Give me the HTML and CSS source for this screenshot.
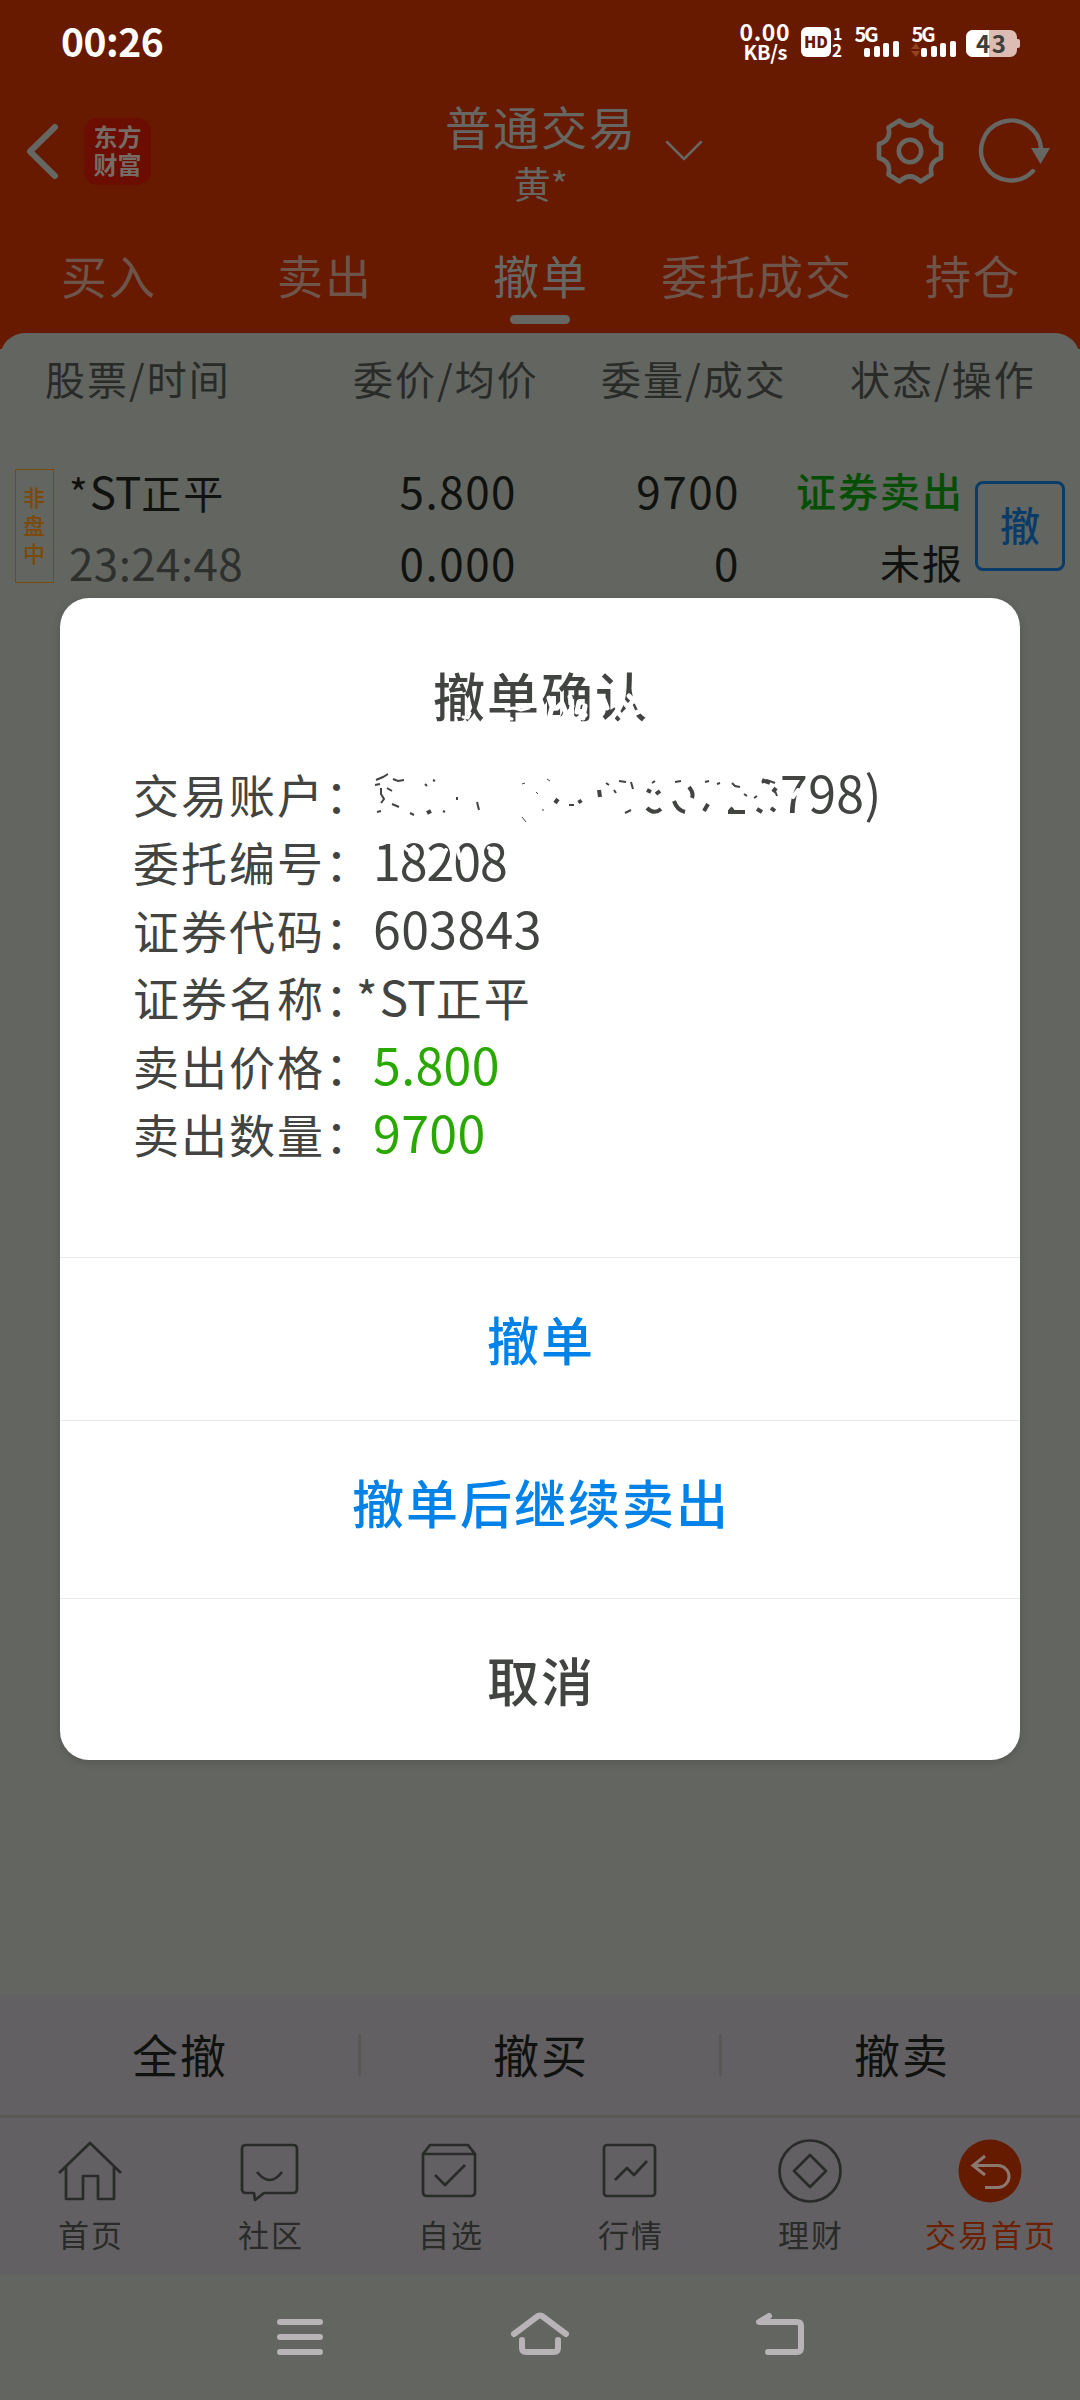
FILE: index.html
```
<!DOCTYPE html>
<html lang="zh-CN">
<head>
    <meta charset="UTF-8">
    <meta name="viewport" content="width=device-width, initial-scale=1.0">
    <title>普通交易</title>
    <link rel="stylesheet" href="styles.css">
</head>
<body>
<div class="phone">
    <header class="header">
        <!-- 状态栏 -->
        <div class="status-bar">
            <span class="time">00:26</span>
            <svg class="status-icons" width="290" height="50" viewBox="735 15 290 50">
                <g class="status-text">
                    <text x="739.5" y="41" font-size="23" textLength="50">0.00</text>
                    <text x="743.5" y="60" font-size="20" textLength="44">KB/s</text>
                    <text x="833" y="39.500" font-size="16">1</text>
                    <text x="832" y="56.500" font-size="17">2</text>
                    <text x="854.500" y="42" font-size="20" textLength="24">5G</text>
                    <text x="911.500" y="42" font-size="20" textLength="24">5G</text>
                </g>
                <rect x="801" y="27" width="30" height="30" rx="6" fill="#fff"/>
                <text class="hd" x="804" y="48" textLength="24">HD</text>
                <g fill="#fff">
                    <rect x="864" y="48" width="6" height="9" rx="2"/>
                    <rect x="874" y="46" width="6" height="11" rx="2"/>
                    <rect x="883" y="43" width="6" height="14" rx="2"/>
                    <rect x="893" y="41" width="6" height="16" rx="2"/>
                    <rect x="921" y="48" width="6" height="9" rx="2"/>
                    <rect x="931" y="46" width="6" height="11" rx="2"/>
                    <rect x="940" y="43" width="6" height="14" rx="2"/>
                    <rect x="950" y="41" width="6" height="16" rx="2"/>
                </g>
                <path d="M911 49l5-6 4 6zM911 51h9l-4 6z" fill="#95421f"/>
                <rect x="966" y="30" width="51" height="27" rx="7" fill="#dcbcb3"/>
                <rect x="1015" y="39" width="5" height="9" rx="2" fill="#dcbcb3"/>
                <path d="M989 30h-16a7 7 0 0 0-7 7v13a7 7 0 0 0 7 7h16z" fill="#fff"/>
                <text class="battery" x="976" y="53" textLength="30">43</text>
            </svg>
        </div>

        <!-- 标题栏 -->
        <div class="title-bar">
            <div class="title-left">
                <svg width="40" height="60" viewBox="0 0 40 60"><path d="M32 6L7 30.500 32 55" fill="none" stroke="#666762" stroke-width="6" stroke-linecap="round" stroke-linejoin="round"/></svg>
                <div class="logo"><span>东方</span><span>财富</span></div>
            </div>
            <div class="title-center">
                <div class="title">普通交易</div>
                <div class="account">黄*</div>
            </div>
            <div class="title-right">
                <svg class="arrow-down" width="40" height="24" viewBox="0 0 40 24"><path d="M3 3l17 17L37 3" fill="none" stroke="#666762" stroke-width="2.500" stroke-linecap="round" stroke-linejoin="round"/></svg>
                <svg width="70" height="70" viewBox="-35 -35 70 70" fill="none" stroke="#666762" stroke-width="4.600" stroke-linejoin="round">
                    <path d="M31 -7V7Q18.500 10.700 21.500 23.500L10.500 30.500Q0 20.500 -10.500 30.500L-21.500 23.500Q-18.500 10.700 -31 7V-7Q-18.500 -10.700 -21.500 -23.500L-10.500 -30.500Q0 -20.500 10.500 -30.500L21.500 -23.500Q18.500 -10.700 31 -7Z"/>
                    <circle r="11.200"/>
                </svg>
                <svg class="refresh" width="76" height="70" viewBox="-35 -35 76 70"><path d="M22 20A30 30 0 1 1 30 -3" fill="none" stroke="#666762" stroke-width="4.400" stroke-linecap="round"/><path d="M20 -3h19l-9.500 16z" fill="#666762"/></svg>
            </div>
        </div>

        <nav class="tabs">
            <span class="tab">买入</span>
            <span class="tab">卖出</span>
            <span class="tab active">撤单</span>
            <span class="tab">委托成交</span>
            <span class="tab">持仓</span>
        </nav>
    </header>

    <!-- 委托列表 -->
    <main class="sheet">
        <div class="list-head">
            <span>股票/时间</span>
            <span>委价/均价</span>
            <span>委量/成交</span>
            <span>状态/操作</span>
        </div>
        <div class="order">
            <div class="tag">非盘中</div>
            <div class="col name"><div>*<span class="num">ST</span>正平</div><div class="num gray">23:24:48</div></div>
            <div class="col price"><div class="num">5.800</div><div class="num">0.000</div></div>
            <div class="col count"><div class="num">9700</div><div class="num">0</div></div>
            <div class="col state"><div class="sell">证券卖出</div><div>未报</div></div>
            <div class="cancel-btn">撤</div>
        </div>
    </main>

    <div class="batch">
        <span>全撤</span>
        <span>撤买</span>
        <span>撤卖</span>
    </div>

    <nav class="menu">
        <div class="menu-item">
            <svg class="icon" viewBox="0 0 66 66"><path d="M2 35L33 5l31 30M9 29v32h17V38h15v23h16V29"/></svg>
            <span>首页</span>
        </div>
        <div class="menu-item">
            <svg class="icon" viewBox="0 0 66 66"><path d="M9 7h47q4 0 4 4v40q0 4-4 4H27l-9 7-1-7H9q-4 0-4-4V11q0-4 4-4zM20 34q13 16 25 0"/></svg>
            <span>社区</span>
        </div>
        <div class="menu-item">
            <svg class="icon" viewBox="0 0 66 66"><path d="M6 16l7-9h38l7 9v38q0 4-4 4H10q-4 0-4-4zM6 16h52M18 37l10 10 20-20"/></svg>
            <span>自选</span>
        </div>
        <div class="menu-item">
            <svg class="icon" viewBox="0 0 66 66"><rect x="7" y="7" width="51" height="51" rx="3"/><path d="M18 42l12-12 7 7 13-14"/></svg>
            <span>行情</span>
        </div>
        <div class="menu-item">
            <svg class="icon" viewBox="0 0 66 66"><circle cx="33" cy="33" r="30.500"/><path d="M33 17l16 16-16 16-16-16z"/></svg>
            <span>理财</span>
        </div>
        <div class="menu-item trade">
            <svg class="icon" viewBox="0 0 66 66"><circle class="disc" cx="33" cy="33" r="31.500"/><path d="M28 18L16 27.500 28 37M16 27.500h25a11 11 0 0 1 0 22H28"/></svg>
            <span>交易首页</span>
        </div>
    </nav>

    <!-- 系统导航 -->
    <div class="sys-nav">
        <svg width="60" height="50" viewBox="270 2310 60 50"><path d="M280 2322h40M280 2337h40M280 2352h40"/></svg>
        <svg width="60" height="50" viewBox="510 2310 60 50"><path d="M514 2334l24-18q2-1 4 0l24 18M522 2340v8q0 4 4 4h28q4 0 4-4v-8"/></svg>
        <svg width="60" height="50" viewBox="750 2310 60 50"><path d="M769 2316l-10 6h38q4 0 4 4v22q0 4-4 4h-29"/></svg>
    </div>

    <!-- 撤单确认弹窗 -->
    <div class="dialog">
        <div class="dialog-title">撤单确认</div>
        <div class="info">
            <div class="line">交易账户：<span class="num account-end">798)</span></div>
            <div class="line">委托编号：<span class="num order-no">18208</span></div>
            <div class="line">证券代码：<span class="num">603843</span></div>
            <div class="line">证券名称<span class="half">：</span><span class="stock">*<span class="num">ST</span>正平</span></div>
            <div class="line">卖出价格：<span class="num green">5.800</span></div>
            <div class="line">卖出数量：<span class="num green">9700</span></div>
        </div>
        <div class="action blue">撤单</div>
        <div class="action blue tall">撤单后继续卖出</div>
        <div class="action">取消</div>

        <!-- 账户涂抹 -->
        <svg class="smear" width="480" height="220" viewBox="360 660 480 220">
            <g fill="none" stroke="#fff" stroke-linecap="round" stroke-linejoin="round">
                <path stroke-width="3" d="M463 717l5 1 2-5M506 709l8-1 7 2 8-2M506 717l6 2M522 718l6-1"/>
                <path stroke-width="5" d="M549 698l3 9-3 12 7 1M557 708l5-5 4 10-4 8M570 697l2 9-3 12M561 719l8-4 7 5 9-5M579 702l-2 10M585 706l-2 12"/>
                <path stroke-width="5" d="M604 700l3 8M617 707l6-6 5 6 4-5M612 718l5-7 5 6M624 714l7-7 3 7 6-3M629 696l5 5"/>
                <path stroke-width="4" d="M378 852l4 4M404 847l5 4 5-4M446 850l-4 8M457 847l3 11M489 848l5 2M798 790l-5 7"/>
            </g>
            <g fill="none" stroke="#424442" stroke-width="2">
                <path d="M376 780l7-3 5-3M375 785l5-1M393 779l5 2 6-1M381 788v6l3 5-3 4M387 788l5 3M392 804l7 3M377 812l4-1M410 813l4 2M425 784l2 2M433 780l2 1M457 797v3M477 802l2 8M443 811l2 1"/>
                <path stroke-width="1" d="M522 784l3-1M536 792l2 2M522 817l4 5M547 779l3 2M542 810h2"/>
                <path d="M569 805h5M606 783l3 2M619 781l7 1M614 790l2 3M631 782l2 7M625 813l6-3M652 783l3-2M675 782l6-1M705 782l4-1M717 784l3-1M732 783l3 3 5 1M744 794l3 2M762 783l5-3 8 3M775 791l2 5M754 798l3-2"/>
            </g>
            <g fill="none" stroke="#424442" stroke-width="4">
                <path d="M427 813l4-2M555 803l3-4M579 800l2 3M599 790l1 7M647 790l4 2M656 794l4-3M647 808q7 7 14 1M689 787q5 6 3 11M674 801q3 9 11 11M704 811l4-7M728 812h17M733 808l-3 3M762 780l8 3M773 792l3-4M757 809l5 3M771 808l4 3"/>
            </g>
        </svg>
    </div>
</div>
</body>
</html>
```
FILE: styles.css
```
body {
    margin: 0;
    background-color: #626560;
    font-family: "Noto Sans CJK SC", sans-serif;
}

svg {
    display: block;
}

.phone {
    position: relative;
    display: flex;
    flex-direction: column;
    width: 1080px;
    height: 2400px;
    overflow: hidden;
    background-color: #626560;
}

/* header */
.header {
    height: 349px;
    background-color: #671a00;
}

.status-bar {
    display: flex;
    justify-content: space-between;
    align-items: flex-start;
    height: 92px;
    padding: 15px 55px 0 61px;
    box-sizing: border-box;
}

.time {
    color: #fff;
    font-size: 39px;
    font-weight: 700;
    line-height: 50px;
    letter-spacing: -0.5px;
}

.status-text {
    fill: #fff;
    font-weight: 700;
}

.hd {
    fill: #671a00;
    font-size: 16px;
    font-weight: 900;
}

.battery {
    fill: #3b403c;
    font-size: 24px;
    font-weight: 700;
}

.title-bar {
    display: grid;
    grid-template-columns: 1fr 200px 1fr;
    height: 146px;
    color: #666762;
}

.title-left {
    display: flex;
    align-items: flex-start;
    gap: 21px;
    padding: 29px 0 0 23px;
}

.logo {
    display: flex;
    flex-direction: column;
    align-items: center;
    justify-content: center;
    width: 67px;
    height: 67px;
    margin-top: -3px;
    border-radius: 14px;
    background-color: #6b0d00;
    color: #766c65;
    font-size: 24px;
    font-weight: 700;
    line-height: 28px;
}

.logo span {
    position: relative;
    top: -2px;
}

.title-center {
    text-align: center;
}

.title {
    padding-left: 2px;
    font-size: 46px;
    letter-spacing: 2px;
    line-height: 66px;
    white-space: nowrap;
}

.account {
    padding-left: 2px;
    font-size: 37px;
    line-height: 51px;
}

.title-right {
    display: flex;
    align-items: flex-start;
    padding: 24px 0 0 24px;
}

.arrow-down {
    margin: 23px 171px 0 0;
}

.refresh {
    margin-left: 31px;
}

.tabs {
    display: flex;
}

.tab {
    flex: 1;
    display: flex;
    flex-direction: column;
    align-items: center;
    color: #6d554b;
    font-size: 46px;
    letter-spacing: 2px;
    text-indent: 2px;
    line-height: 73px;
    white-space: nowrap;
}

.tab.active {
    color: #666762;
}

.tab.active::after {
    content: "";
    width: 60px;
    height: 9px;
    margin-top: 4px;
    border-radius: 5px;
    background-color: #666762;
}

/* order list */
.sheet {
    flex: 1;
    margin-top: -16px;
    border-radius: 25px 25px 0 0;
    background-color: #626560;
}

.list-head {
    display: grid;
    grid-template-columns: 308px 248px 249px auto;
    padding-left: 45px;
    color: #292b29;
    font-size: 40px;
    letter-spacing: 2px;
    line-height: 90px;
}

.order {
    display: flex;
    align-items: flex-start;
    height: 144px;
    margin-top: 31px;
    padding-left: 15px;
    color: #101210;
    font-size: 40px;
    letter-spacing: 2px;
}

.tag {
    width: 23px;
    height: 88px;
    margin: 15px 15px 0 0;
    padding: 12px 7px;
    border: 1px solid #7b4a08;
    color: #7b4a08;
    font-size: 22px;
    font-weight: 500;
    line-height: 28px;
    letter-spacing: 0;
}

.col {
    line-height: 72px;
    text-align: right;
    white-space: nowrap;
}

.col > div {
    height: 72px;
}

.name {
    width: 200px;
    text-align: left;
}

.price {
    width: 248px;
}

.count {
    width: 223px;
}

.state {
    width: 224px;
}

.num {
    font-size: 44px;
    letter-spacing: 0;
}

.price .num,
.count .num {
    letter-spacing: 1.5px;
}

.gray {
    color: #2e302e;
    letter-spacing: 0.4px;
}

.sell {
    color: #044e04;
    font-weight: 500;
}

.cancel-btn {
    width: 84px;
    height: 84px;
    margin: 27px 0 0 11px;
    border: 3px solid #093c69;
    border-radius: 8px;
    color: #093c69;
    font-weight: 500;
    line-height: 81px;
    letter-spacing: 0;
    text-align: center;
}

/* bottom bars */
.batch {
    display: flex;
    align-items: center;
    height: 120px;
    border-bottom: 3px solid #5a5757;
    background-color: #636063;
    color: #101210;
    font-size: 46px;
    letter-spacing: 2px;
}

.batch span {
    flex: 1;
    height: 42px;
    line-height: 39px;
    text-align: center;
    text-indent: 2px;
}

.batch span + span {
    border-left: 3px solid #5a5757;
}

.menu {
    display: flex;
    height: 156px;
    background-color: #636063;
    color: #292b29;
}

.menu-item {
    flex: 1;
    display: flex;
    flex-direction: column;
    align-items: center;
    padding-top: 20px;
    font-size: 31px;
    letter-spacing: 2px;
    text-indent: 2px;
    line-height: 59px;
    white-space: nowrap;
}

.icon {
    width: 66px;
    height: 66px;
    fill: none;
    stroke: #292b29;
    stroke-width: 2.7;
    stroke-linejoin: round;
}

.trade {
    color: #6b2000;
}

.trade .icon {
    stroke: #8b7971;
    stroke-width: 3;
    stroke-linejoin: miter;
}

.trade .disc {
    fill: #651b00;
    stroke: none;
}

.sys-nav {
    display: flex;
    justify-content: center;
    gap: 180px;
    height: 90px;
    padding-top: 36px;
}

.sys-nav svg {
    fill: none;
    stroke: #b7b3b7;
    stroke-width: 6;
    stroke-linecap: round;
    stroke-linejoin: round;
}

/* dialog */
.dialog {
    position: absolute;
    top: 598px;
    left: 60px;
    width: 960px;
    height: 1162px;
    border-radius: 29px;
    background-color: #fff;
    box-shadow: 0 2px 8px rgba(0, 0, 0, 0.15);
    color: #424442;
}

.dialog-title {
    padding-top: 60px;
    font-size: 52px;
    font-weight: 500;
    letter-spacing: 2px;
    text-indent: 2px;
    line-height: 74px;
    text-align: center;
}

.info {
    height: 500px;
    margin-top: 25px;
    padding-left: 73px;
}

.line {
    height: 68px;
    font-size: 46px;
    letter-spacing: 2px;
    line-height: 68px;
    white-space: nowrap;
}

.line .num {
    font-size: 50px;
    letter-spacing: 0.4px;
}

.line .account-end {
    margin-left: 407px;
}

.line .order-no {
    letter-spacing: -1px;
}

.half {
    font-feature-settings: "halt";
}

.stock {
    margin-left: 6px;
}

.stock .num {
    font-size: 48px;
    letter-spacing: 0;
}

.green {
    color: #28a800;
}

.action {
    height: 162px;
    border-top: 1px solid #e9e9e9;
    font-size: 52px;
    font-weight: 500;
    letter-spacing: 2px;
    text-indent: 2px;
    line-height: 162px;
    text-align: center;
}

.tall {
    height: 177px;
}

.blue {
    color: #0082e8;
}

.smear {
    position: absolute;
    top: 62px;
    left: 300px;
}
```
